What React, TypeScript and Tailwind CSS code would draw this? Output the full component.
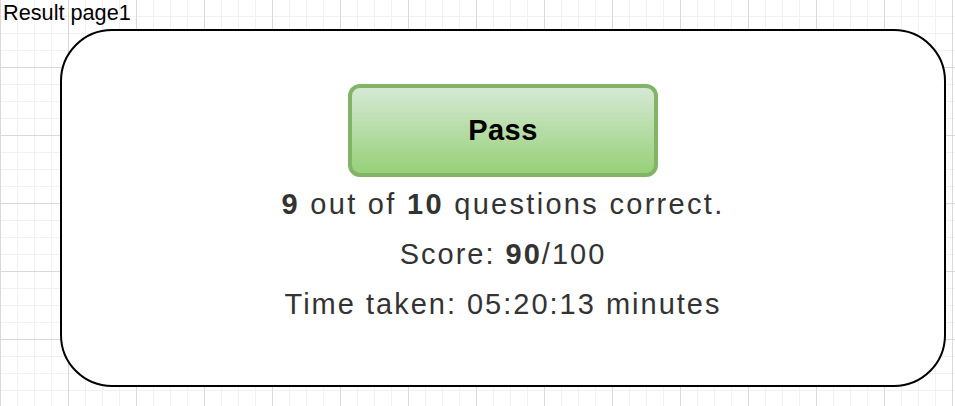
export default function App() {
  return (
    <div className="h-[406px] w-full overflow-hidden bg-white font-['Liberation_Sans',Arial,sans-serif] [background-image:linear-gradient(to_right,#d9d9d9_1px,transparent_1px),linear-gradient(to_bottom,#d9d9d9_1px,transparent_1px),linear-gradient(to_right,#f1f1f1_1px,transparent_1px),linear-gradient(to_bottom,#f1f1f1_1px,transparent_1px)] [background-size:68px_68px,68px_68px,17px_17px,17px_17px] [background-position:0_-1px]">
      <p className="h-[25px] pl-[3px] text-[21.7px] leading-[25px] text-black">
        Result page1
      </p>

      <div className="ml-[60px] mt-[4px] flex h-[358px] w-[886px] flex-col items-center rounded-[52px] border-2 border-black bg-white pt-[53px]">
        <div className="flex h-[93px] w-[310px] items-center justify-center rounded-[12px] border-[4px] border-[#82b366] bg-linear-to-b from-[#d5e8d4] to-[#97d077]">
          <span className="text-[29px] font-bold tracking-[0.5px] text-black">
            Pass
          </span>
        </div>

        <div className="mt-[2px] text-center text-[29px] leading-[50px] tracking-[2px] text-[#333333]">
          <p className="tracking-[2.3px]">
            <b>9</b> out of <b>10</b> questions correct.
          </p>
          <p>
            Score: <b>90</b>/100
          </p>
          <p>Time taken: 05:20:13 minutes</p>
        </div>
      </div>
    </div>
  );
}
